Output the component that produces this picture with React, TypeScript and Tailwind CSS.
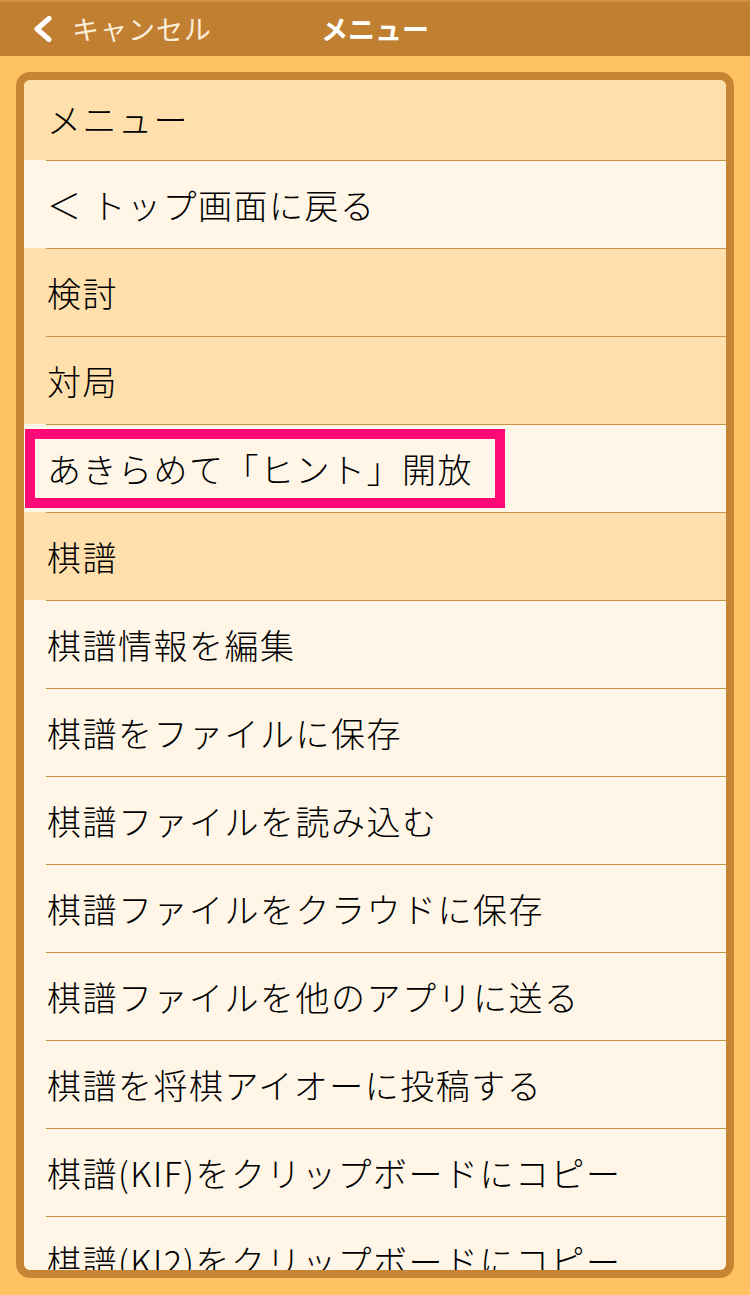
type Row = { label: string; section?: boolean };

const rows: Row[] = [
  { label: "＜ トップ画面に戻る" },
  { label: "検討", section: true },
  { label: "対局", section: true },
  { label: "あきらめて「ヒント」開放" },
  { label: "棋譜", section: true },
  { label: "棋譜情報を編集" },
  { label: "棋譜をファイルに保存" },
  { label: "棋譜ファイルを読み込む" },
  { label: "棋譜ファイルをクラウドに保存" },
  { label: "棋譜ファイルを他のアプリに送る" },
  { label: "棋譜を将棋アイオーに投稿する" },
  { label: "棋譜(KIF)をクリップボードにコピー" },
  { label: "棋譜(KI2)をクリップボードにコピー" },
];

const font = { fontFamily: '"Noto Sans CJK JP", "Noto Sans", sans-serif' };

export default function App() {
  return (
    <div className="w-[750px] h-[1295px] bg-[#fec263] flex flex-col overflow-hidden" style={font}>
      <header className="h-[56px] shrink-0 bg-[#c17f32] border-t-2 border-[#d08f40] relative flex items-center">
        <div className="flex items-center pl-[32px] text-[27px] text-[#fdeedb]">
          <svg width="20" height="26" viewBox="0 0 20 26" fill="none">
            <path d="M17 2.5 L5 13 L17 23.5" stroke="#ffffff" strokeWidth="5" strokeLinecap="round" strokeLinejoin="round" />
          </svg>
          <span className="ml-[20px] tracking-[1px]">キャンセル</span>
        </div>
        <div className="absolute left-0 right-0 text-center text-[27px] font-bold text-white pointer-events-none">
          メニュー
        </div>
      </header>

      <div className="flex-1 px-[16px] pt-[16px] pb-[17px] min-h-0">
        <div className="h-full border-[8px] border-[#c78533] rounded-[14px] overflow-hidden">
          <div className="h-full rounded-[6px] overflow-hidden bg-[#fff6e7] relative">
            <div className="h-[80px] bg-[#ffdfab] flex items-center pl-[23px] pb-[4px] text-[34px] tracking-[1.5px] font-light text-black">
              メニュー
            </div>
            {rows.map((row) => (
              <div key={row.label} className={row.section ? "bg-[#ffdfab]" : "bg-[#fff6e7]"}>
                <div className="ml-[22px] h-px bg-[#c8934a]" />
                <div className="h-[87px] flex items-center pl-[23px] text-[34px] tracking-[1.5px] font-light text-black whitespace-nowrap">
                  {row.label}
                </div>
              </div>
            ))}
            <div className="absolute left-[1px] top-[349px] w-[480px] h-[79px] border-[10px] border-[#fe0a78]" />
          </div>
        </div>
      </div>
    </div>
  );
}
